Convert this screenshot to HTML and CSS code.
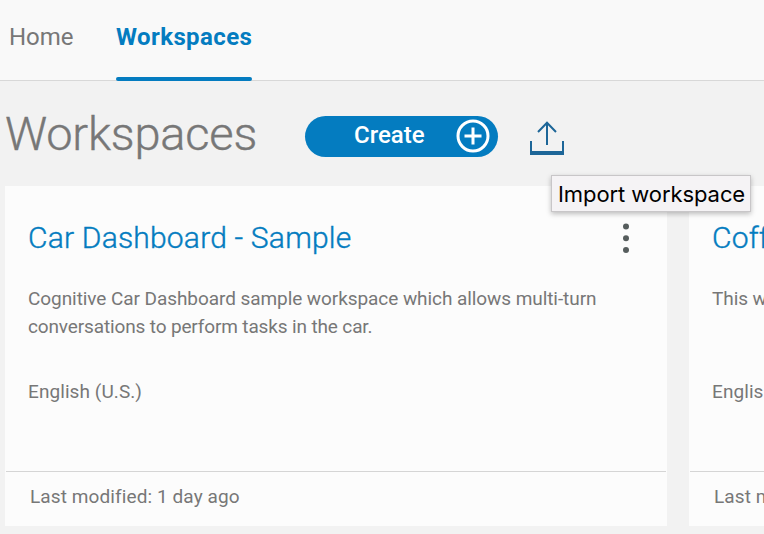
FILE: index.html
```html
<!DOCTYPE html>
<html lang="en">
<head>
<meta charset="utf-8">
<title>Workspaces</title>
<link rel="stylesheet" href="styles.css">
</head>
<body>
<nav class="tabs">
  <a class="tab home"><span>Home</span></a>
  <a class="tab active"><span>Workspaces</span></a>
</nav>
<main>
  <div class="toolbar">
    <h1><span>Workspaces</span></h1>
    <button class="create"><span>Create</span>
      <svg width="34" height="34" viewBox="0 0 34 34" fill="none" stroke="#fff" stroke-width="3"><circle cx="17" cy="17" r="15"/><path d="M17 8.5v17M8.5 17h17"/></svg>
    </button>
    <div class="import">
      <svg width="36" height="36" viewBox="0 0 36 36" fill="none" stroke="#1d6698" stroke-width="2"><path d="M18 25V3M9 12l9-9.2 9 9.2M2 21v11M34 21v11"/><path d="M1 33h34" stroke-width="4"/></svg>
      <div class="tooltip"><span>Import workspace</span></div>
    </div>
  </div>
  <section class="cards">
    <article class="card">
      <div class="card-head">
        <h2><span>Car Dashboard - Sample</span></h2>
        <svg class="menu" width="8" height="32" viewBox="0 0 8 32" fill="#565d5d"><circle cx="4" cy="4.5" r="3"/><circle cx="4" cy="16.2" r="3"/><circle cx="4" cy="28" r="3"/></svg>
      </div>
      <p class="desc"><span class="d1">Cognitive Car Dashboard sample workspace which allows multi-turn</span><br><span class="d2">conversations to perform tasks in the car.</span></p>
      <p class="lang"><span>English (U.S.)</span></p>
      <footer><span>Last modified: 1 day ago</span></footer>
    </article>
    <article class="card">
      <div class="card-head"><h2><span>Coffee</span></h2></div>
      <p class="desc"><span class="d1">This workspace</span></p>
      <p class="lang"><span>English (U.S.)</span></p>
      <footer><span>Last modified: 1 day ago</span></footer>
    </article>
  </section>
</main>
</body>
</html>
```
FILE: styles.css
```css
* { box-sizing: border-box; }
body { margin: 0; height: 534px; overflow: hidden; background: #f2f2f2; color: #777; font-family: Roboto, "Liberation Sans", sans-serif; }
h1, h2, p { margin: 0; font-weight: 300; white-space: nowrap; }
.tabs { display: flex; height: 81px; background: #f9f9f9; border-bottom: 1px solid #d8d8d8; padding-left: 9px; }
.tab { font-size: 24px; line-height: 74px; height: 81px; white-space: nowrap; }
.home { width: 107px; }
.active { display: flex; flex-direction: column; width: 136px; color: #047cc0; font-weight: 700; letter-spacing: .4px; }
.active span { height: 77px; }
.active::after { content: ""; height: 4px; border-radius: 2px; background: #047cc0; }
.toolbar { display: flex; align-items: flex-start; height: 105px; padding-left: 5px; }
h1 { width: 300px; font-size: 47px; line-height: 106px; letter-spacing: -.2px; -webkit-text-stroke: .4px #777; }
.create { display: flex; align-items: flex-start; justify-content: space-between; width: 193px; height: 41px; margin-top: 35px; padding: 3px 8px 0 49px; border: 0; border-radius: 21px; background: #047cc0; color: #fff; font: 500 24px/32px Roboto, sans-serif; }
.import { position: relative; width: 36px; height: 36px; margin: 39px 0 0 31px; }
.import svg { display: block; }
.tooltip { position: absolute; z-index: 2; left: 22px; top: 55px; width: 200px; height: 37px; padding-left: 6px; background: #f5f3f5; border: 1px solid #c8c6c8; box-shadow: 0 2px 5px rgba(0,0,0,.25); color: #000; font: 22px/36px Inter, sans-serif; letter-spacing: -.08px; white-space: nowrap; }
.cards { display: flex; gap: 22px; padding-left: 5px; }
.card { flex: 0 0 662px; height: 340px; padding: 0 1px; background: #fcfcfc; }
.card-head { display: flex; justify-content: space-between; height: 99px; padding: 0 36px 0 22px; }
h2 { color: #047cc0; font-size: 30px; line-height: 104px; letter-spacing: .2px; -webkit-text-stroke: .4px #047cc0; }
.menu { margin-top: 36px; }
.desc, .lang { padding-left: 22px; font-size: 19px; font-weight: 400; line-height: 28px; }
.desc { height: 93px; }
.d1 { letter-spacing: -.07px; }
.d2 { letter-spacing: -.14px; }
.lang { height: 93px; letter-spacing: .08px; }
footer { height: 54px; border-top: 1px solid #d5d5d5; padding-left: 24px; font-size: 19px; line-height: 50px; letter-spacing: .1px; white-space: nowrap; }
```
